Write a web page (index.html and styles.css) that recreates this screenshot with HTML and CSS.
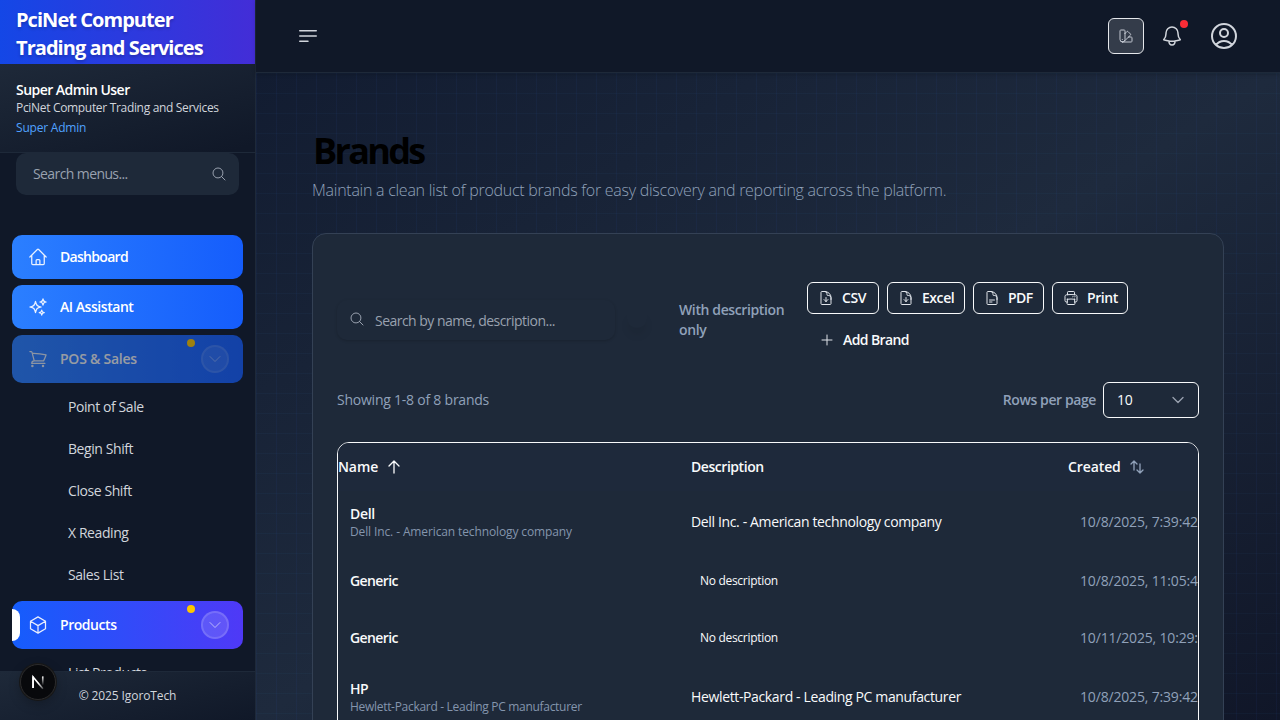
FILE: index.html
```html
<!DOCTYPE html>
<html lang="en">
<head>
<meta charset="utf-8">
<title>Brands - PciNet Computer Trading and Services</title>
<link rel="stylesheet" href="styles.css">
</head>
<body>
<svg class="sprite" aria-hidden="true">
  <symbol id="home" viewBox="0 0 24 24"><path d="M2.25 12l8.954-8.955c.44-.439 1.152-.439 1.591 0L21.75 12M4.5 9.75v10.125c0 .621.504 1.125 1.125 1.125H9.75v-4.875c0-.621.504-1.125 1.125-1.125h2.25c.621 0 1.125.504 1.125 1.125V21h4.125c.621 0 1.125-.504 1.125-1.125V9.75M8.25 21h8.25"/></symbol>
  <symbol id="sparkles" viewBox="0 0 24 24"><path d="M9.813 15.904L9 18.75l-.813-2.846a4.5 4.5 0 00-3.09-3.09L2.25 12l2.846-.813a4.5 4.5 0 003.09-3.09L9 5.25l.813 2.846a4.5 4.5 0 003.09 3.09L15.75 12l-2.846.813a4.5 4.5 0 00-3.09 3.09zM18.259 8.715L18 9.75l-.259-1.035a3.375 3.375 0 00-2.455-2.456L14.25 6l1.036-.259a3.375 3.375 0 002.455-2.456L18 2.25l.259 1.035a3.375 3.375 0 002.456 2.456L21.75 6l-1.035.259a3.375 3.375 0 00-2.456 2.456zM16.894 20.567L16.5 21.75l-.394-1.183a2.25 2.25 0 00-1.423-1.423L13.5 18.75l1.183-.394a2.25 2.25 0 001.423-1.423l.394-1.183.394 1.183a2.25 2.25 0 001.423 1.423l1.183.394-1.183.394a2.25 2.25 0 00-1.423 1.423z"/></symbol>
  <symbol id="cart" viewBox="0 0 24 24"><path d="M2.25 3h1.386c.51 0 .955.343 1.087.835l.383 1.437M7.5 14.25a3 3 0 00-3 3h15.75m-12.75-3h11.218c1.121-2.3 2.1-4.684 2.924-7.138a60.114 60.114 0 00-16.536-1.84M7.5 14.25L5.106 5.272M6 20.25a.75.75 0 11-1.5 0 .75.75 0 011.5 0zm12.75 0a.75.75 0 11-1.5 0 .75.75 0 011.5 0z"/></symbol>
  <symbol id="cube" viewBox="0 0 24 24"><path d="M21 7.5l-9-5.25L3 7.5m18 0l-9 5.25m9-5.25v9l-9 5.25M3 7.5l9 5.25M3 7.5v9l9 5.25m0-9v9"/></symbol>
  <symbol id="bell" viewBox="0 0 24 24"><path d="M14.857 17.082a23.848 23.848 0 005.454-1.31A8.967 8.967 0 0118 9.75v-.7V9A6 6 0 006 9v.75a8.967 8.967 0 01-2.312 6.022c1.733.64 3.56 1.085 5.455 1.31m5.714 0a24.255 24.255 0 01-5.714 0m5.714 0a3 3 0 11-5.714 0"/></symbol>
  <symbol id="user" viewBox="0 0 24 24"><path d="M17.982 18.725A7.488 7.488 0 0012 15.75a7.488 7.488 0 00-5.982 2.975m11.963 0a9 9 0 10-11.963 0m11.963 0A8.966 8.966 0 0112 21a8.966 8.966 0 01-5.982-2.275M15 9.75a3 3 0 11-6 0 3 3 0 016 0z"/></symbol>
  <symbol id="swatch" viewBox="0 0 24 24"><path d="M4.098 19.902a3.75 3.75 0 005.304 0l6.401-6.402M6.75 21A3.75 3.75 0 013 17.25V4.125C3 3.504 3.504 3 4.125 3h5.25c.621 0 1.125.504 1.125 1.125v4.072M6.75 21a3.75 3.75 0 003.75-3.75V8.197M6.75 21h13.125c.621 0 1.125-.504 1.125-1.125v-5.25c0-.621-.504-1.125-1.125-1.125h-4.072M10.5 8.197l2.88-2.88c.438-.439 1.15-.439 1.59 0l3.712 3.713c.44.44.44 1.152 0 1.59l-2.879 2.88M6.75 17.25h.008v.008H6.75v-.008z"/></symbol>
  <symbol id="download" viewBox="0 0 24 24"><path d="M19.5 14.25v-2.625a3.375 3.375 0 00-3.375-3.375h-1.5A1.125 1.125 0 0113.5 7.125v-1.5a3.375 3.375 0 00-3.375-3.375H8.25m.75 12l3 3m0 0l3-3m-3 3v-6m-1.5-9H5.625c-.621 0-1.125.504-1.125 1.125v17.25c0 .621.504 1.125 1.125 1.125h12.75c.621 0 1.125-.504 1.125-1.125V11.25a9 9 0 00-9-9z"/></symbol>
  <symbol id="document" viewBox="0 0 24 24"><path d="M19.5 14.25v-2.625a3.375 3.375 0 00-3.375-3.375h-1.5A1.125 1.125 0 0113.5 7.125v-1.5a3.375 3.375 0 00-3.375-3.375H8.25m0 12.75h7.5m-7.5 3H12M10.5 2.25H5.625c-.621 0-1.125.504-1.125 1.125v17.25c0 .621.504 1.125 1.125 1.125h12.75c.621 0 1.125-.504 1.125-1.125V11.25a9 9 0 00-9-9z"/></symbol>
  <symbol id="printer" viewBox="0 0 24 24"><path d="M6.72 13.829c-.24.03-.48.062-.72.096m.72-.096a42.415 42.415 0 0110.56 0m-10.56 0L6.34 18m10.94-4.171c.24.03.48.062.72.096m-.72-.096L17.66 18m0 0l.229 2.523a1.125 1.125 0 01-1.12 1.227H7.231c-.662 0-1.18-.568-1.12-1.227L6.34 18m11.318 0h1.091A2.25 2.25 0 0021 15.75V9.456c0-1.081-.768-2.015-1.837-2.175a48.055 48.055 0 00-1.913-.247M6.34 18H5.25A2.25 2.25 0 013 15.75V9.456c0-1.081.768-2.015 1.837-2.175a48.041 48.041 0 011.913-.247m10.5 0a48.536 48.536 0 00-10.5 0m10.5 0V3.375c0-.621-.504-1.125-1.125-1.125h-8.25c-.621 0-1.125.504-1.125 1.125v3.659M18 10.5h.008v.008H18V10.5zm-3 0h.008v.008H15V10.5z"/></symbol>
  <symbol id="search" viewBox="0 0 24 24"><path d="M21 21l-5.197-5.197m0 0A7.5 7.5 0 105.196 5.196a7.5 7.5 0 0010.607 10.607z"/></symbol>
  <symbol id="plus" viewBox="0 0 24 24"><path d="M12 4.5v15m7.5-7.5h-15"/></symbol>
  <symbol id="chevron" viewBox="0 0 24 24"><path d="M19.5 8.25l-7.5 7.5-7.5-7.5"/></symbol>
  <symbol id="menu" viewBox="0 0 24 24"><path d="M3.75 6.75h16.5M3.75 12h16.5m-16.5 5.25H12"/></symbol>
  <symbol id="up" viewBox="0 0 24 24"><path d="M4.5 10.5L12 3m0 0l7.5 7.5M12 3v18"/></symbol>
  <symbol id="sort" viewBox="0 0 24 24"><path d="M3 7.5L7.5 3m0 0L12 7.5M7.5 3v13.5m13.5 0L16.5 21m0 0L12 16.5m4.5 4.5V7.5"/></symbol>
</svg>

<div class="app">
  <aside class="sidebar">
    <div class="logo">PciNet Computer<br>Trading and Services</div>
    <div class="profile">
      <div class="profile-name">Super Admin User</div>
      <div class="profile-org">PciNet Computer Trading and Services</div>
      <div class="profile-role">Super Admin</div>
    </div>
    <div class="menu-search"><span>Search menus...</span><svg class="icon i16"><use href="#search"/></svg></div>
    <nav class="nav">
      <a class="item tight"><svg class="icon i20"><use href="#home"/></svg><span>Dashboard</span></a>
      <a class="item"><svg class="icon i20"><use href="#sparkles"/></svg><span>AI Assistant</span></a>
      <a class="item group dim"><svg class="icon i20"><use href="#cart"/></svg><span>POS &amp; Sales</span><i class="toggle"><svg class="icon i16"><use href="#chevron"/></svg></i><b class="dot"></b></a>
      <div class="sub">
        <a>Point of Sale</a><a>Begin Shift</a><a>Close Shift</a><a>X Reading</a><a>Sales List</a>
      </div>
      <a class="item group active"><svg class="icon i20"><use href="#cube"/></svg><span>Products</span><i class="toggle"><svg class="icon i16"><use href="#chevron"/></svg></i><b class="dot"></b></a>
      <div class="sub"><a>List Products</a></div>
    </nav>
    <footer class="side-foot">© 2025 IgoroTech</footer>
    <div class="dev-badge"><svg viewBox="0 0 40 40" class="n-mark">
      <defs>
        <linearGradient id="n1" gradientUnits="userSpaceOnUse" x1="20" y1="22" x2="26" y2="30"><stop offset="0" stop-color="#fff"/><stop offset="1" stop-color="#fff" stop-opacity=".1"/></linearGradient>
        <linearGradient id="n2" gradientUnits="userSpaceOnUse" x1="26" y1="13" x2="26" y2="24"><stop offset="0" stop-color="#fff"/><stop offset="1" stop-color="#fff" stop-opacity="0"/></linearGradient>
      </defs>
      <path d="M14.2 27V14.2L25.8 28" fill="none" stroke="url(#n1)" stroke-width="1.9"/>
      <path d="M14.2 27V13.4" stroke="#fff" stroke-width="1.9"/>
      <path d="M25.6 13.4V24" stroke="url(#n2)" stroke-width="1.9"/>
    </svg></div>
  </aside>

  <div class="page">
    <header class="topbar">
      <svg class="icon i24"><use href="#menu"/></svg>
      <div class="actions">
        <button class="theme"><svg class="icon i16"><use href="#swatch"/></svg></button>
        <div class="bell"><svg class="icon i24"><use href="#bell"/></svg><b></b></div>
        <svg class="icon i32"><use href="#user"/></svg>
      </div>
    </header>
    <main class="main">
      <h1>Brands</h1>
      <p class="lead">Maintain a clean list of product brands for easy discovery and reporting across the platform.</p>
      <section class="card">
        <div class="toolbar">
          <div class="search"><svg class="icon i16"><use href="#search"/></svg><span>Search by name, description...</span></div>
          <div class="switch"><i></i></div>
          <div class="switch-label">With description only</div>
          <div class="buttons">
            <button class="btn b-csv"><svg class="icon i16"><use href="#download"/></svg><span>CSV</span></button>
            <button class="btn b-excel"><svg class="icon i16"><use href="#download"/></svg><span>Excel</span></button>
            <button class="btn b-pdf"><svg class="icon i16"><use href="#document"/></svg><span>PDF</span></button>
            <button class="btn b-print"><svg class="icon i16"><use href="#printer"/></svg><span>Print</span></button>
            <button class="btn add"><svg class="icon i16"><use href="#plus"/></svg><span>Add Brand</span></button>
          </div>
        </div>
        <div class="summary">
          <span class="showing">Showing 1-8 of 8 brands</span>
          <span class="rows-label">Rows per page</span>
          <div class="select"><span>10</span><svg class="icon i16"><use href="#chevron"/></svg></div>
        </div>
        <div class="table">
          <div class="row head">
            <div class="sortable"><span>Name</span><svg class="icon i16"><use href="#up"/></svg></div>
            <div class="head-desc">Description</div>
            <div class="sortable muted"><span>Created</span><svg class="icon i16"><use href="#sort"/></svg></div>
          </div>
          <div class="row tall">
            <div class="name short"><strong>Dell</strong><small>Dell Inc. - American technology company</small></div>
            <div class="desc">Dell Inc. - American technology company</div>
            <div class="date">10/8/2025, 7:39:42 AM</div>
          </div>
          <div class="row">
            <div class="name"><strong>Generic</strong></div>
            <div class="none">No description</div>
            <div class="date">10/8/2025, 11:05:42 AM</div>
          </div>
          <div class="row">
            <div class="name"><strong>Generic</strong></div>
            <div class="none">No description</div>
            <div class="date">10/11/2025, 10:29:15 AM</div>
          </div>
          <div class="row tall">
            <div class="name"><strong>HP</strong><small>Hewlett-Packard - Leading PC manufacturer</small></div>
            <div class="desc">Hewlett-Packard - Leading PC manufacturer</div>
            <div class="date">10/8/2025, 7:39:42 AM</div>
          </div>
        </div>
      </section>
    </main>
  </div>
</div>
</body>
</html>
```
FILE: styles.css
```css
* { box-sizing: border-box; }
body {
  margin: 0;
  height: 720px;
  overflow: hidden;
  background: #101828;
  color: #f9fafb;
  font: 14px/20px "Open Sans", "Noto Sans", sans-serif;
  white-space: nowrap;
}
button { font: inherit; color: inherit; background: none; padding: 0; }
.sprite { position: absolute; width: 0; height: 0; }
.icon { fill: none; stroke: currentColor; stroke-width: 1.5; stroke-linecap: round; stroke-linejoin: round; flex: none; display: block; }
.i16 { width: 16px; height: 16px; }
.i20 { width: 20px; height: 20px; }
.i24 { width: 24px; height: 24px; }
.i32 { width: 32px; height: 32px; }
.app { display: flex; height: 720px; overflow: hidden; }

/* Sidebar */
.sidebar { position: relative; width: 256px; height: 720px; flex: none; display: flex; flex-direction: column; background: #101828; border-right: 1px solid #1e2939; }
.logo { height: 64px; flex: none; padding: 6px 16px; background: linear-gradient(90deg, #1447e6, #432dd7); color: #fff; font-size: 20px; line-height: 28px; font-weight: 700; letter-spacing: -.95px; text-shadow: 0 2px 3px rgba(0,0,0,.2); }
.profile { height: 89px; flex: none; padding: 16px 16px 0; border-bottom: 1px solid #1e2939; background: linear-gradient(165deg, #1e2939, #101828 95%); }
.profile-name { font-weight: 600; letter-spacing: -.53px; color: #fff; }
.profile-org { font-size: 12px; line-height: 16px; letter-spacing: -.32px; color: #d1d5dc; }
.profile-role { font-size: 12px; line-height: 16px; margin-top: 4px; letter-spacing: -.2px; color: #51a2ff; }
.menu-search { height: 42px; flex: none; margin: 0 16px; padding: 0 12px 0 17px; display: flex; align-items: center; justify-content: space-between; border-radius: 10px; background: #1e2939; color: #99a1af; letter-spacing: -.6px; }
.nav { flex: 1; overflow: hidden; padding: 40px 12px 0; }
.item { position: relative; display: flex; align-items: center; gap: 12px; height: 44px; margin-bottom: 6px; padding: 0 14px 0 16px; border-radius: 10px; font-weight: 600; letter-spacing: -.45px; color: #fff; background: linear-gradient(90deg, #2b7fff, #155dfc); }
.tight { letter-spacing: -.7px; }
.item .icon { opacity: .9; }
.item span { flex: 1; }
.group { height: 48px; margin-bottom: 3px; }
.dim { opacity: .6; color: #f3f4f6; letter-spacing: -.25px; }
.active { margin-bottom: 3px; background: linear-gradient(90deg, #155dfc, #4f39f6); }
.active::before { content: ""; position: absolute; left: 0; top: 8px; width: 8px; height: 32px; background: #fff; border-radius: 0 8px 8px 0; }
.toggle { width: 28px; height: 28px; display: flex; align-items: center; justify-content: center; border-radius: 50%; border: 2px solid rgba(255,255,255,.14); background: rgba(255,255,255,.13); color: rgba(255,255,255,.65); }
.dim .toggle { opacity: .7; }
.dot { position: absolute; top: 4px; left: 175px; width: 8px; height: 8px; border-radius: 50%; background: #fdc700; }
.sub { display: flex; flex-direction: column; padding-bottom: 5px; }
.sub a { height: 42px; line-height: 42px; padding-left: 56px; color: #d1d5dc; letter-spacing: -.42px; }
.side-foot { height: 49px; flex: none; border-top: 1px solid #1e2939; background: linear-gradient(165deg, #1e2939, #101828); text-align: center; font-size: 12px; line-height: 48px; color: #d1d5dc; letter-spacing: -.1px; }
.dev-badge { position: absolute; left: 20px; top: 664px; width: 36px; height: 36px; border-radius: 50%; background: #08090c; border: 1px solid #2b2b2d; box-shadow: 0 0 0 1px #171717, 0 4px 12px rgba(0,0,0,.25); }
.n-mark { display: block; width: 34px; height: 34px; }

/* Page */
.page { width: 1024px; display: flex; flex-direction: column; }
.topbar { position: relative; height: 73px; flex: none; display: flex; align-items: center; justify-content: space-between; padding: 0 40px; border-bottom: 1px solid #1e2939; background: #101828; color: #d1d5dc; box-shadow: 0 1px 4px rgba(0,0,0,.25); }
.actions { display: flex; align-items: center; }
.theme { width: 36px; height: 36px; display: grid; place-items: center; border: 1px solid #e5e7eb; border-radius: 6px; background: #343c4a; color: #c2c7d0; }
.bell { position: relative; margin: 0 24px 0 16px; }
.bell b { position: absolute; left: 20px; top: -4px; width: 8px; height: 8px; border-radius: 50%; background: #fb2c36; }
.main {
  height: 647px;
  overflow: hidden;
  padding: 56px 56px 0;
  background:
    linear-gradient(90deg, rgba(43,90,200,.07) 1px, transparent 1px) 0 0 / 20px 20px,
    linear-gradient(rgba(43,110,170,.06) 1px, transparent 1px) 0 0 / 20px 20px,
    linear-gradient(to bottom right, #121c31, #1e2a3d 50%, #101628);
}
h1 { margin: 0; padding-left: 1px; font-size: 36px; line-height: 44px; font-weight: 700; letter-spacing: -2.7px; color: #000; }
.lead { margin: 5px 0 0; font-size: 16px; line-height: 24px; font-weight: 300; letter-spacing: -.26px; color: #90a1b9; }
.card { height: 560px; margin-top: 31px; padding: 48px 24px 0; border: 1px solid #344155; border-radius: 14px; background: #1e2939; }
.toolbar { display: flex; }
.search { width: 278px; height: 40px; margin-top: 18px; padding-left: 12px; display: flex; align-items: center; gap: 10px; border-radius: 10px; box-shadow: 0 1px 3px rgba(0,0,0,.18); color: #99a1af; }
.search span { margin-top: 2px; letter-spacing: -.53px; }
.search .icon { margin-top: -2px; }
.switch { width: 40px; height: 24px; margin: 26px 0 0 10px; }
.switch i { display: block; margin-left: 2px; width: 20px; height: 20px; border-radius: 50%; box-shadow: 0 8px 10px -1px rgba(0,0,0,.07); }
.switch-label { width: 112px; margin: 18px 0 0 14px; white-space: normal; font-weight: 600; color: #90a1b9; letter-spacing: -.38px; }
.buttons { width: 350px; margin-left: 16px; display: flex; flex-wrap: wrap; gap: 10px 8px; }
.btn { height: 32px; display: flex; align-items: center; gap: 8px; padding-left: 10px; border: 1px solid #f9fafb; border-radius: 6px; font-weight: 600; }
.btn .icon { color: #e0e4ea; }
.b-csv { width: 72px; letter-spacing: -.4px; }
.b-excel { width: 78px; letter-spacing: -.45px; }
.b-pdf { width: 71px; letter-spacing: -.6px; }
.b-print { width: 76px; letter-spacing: -.4px; }
.add { width: 120px; border-color: transparent; padding-left: 11px; letter-spacing: -.6px; }
.summary { display: flex; align-items: center; margin-top: 26px; color: #90a1b9; letter-spacing: -.23px; }
.rows-label { margin-left: auto; font-weight: 600; letter-spacing: -.4px; }
.select { width: 96px; height: 36px; margin-left: 7px; padding: 0 12px 0 13px; display: flex; align-items: center; justify-content: space-between; border: 1px solid #f9fafb; border-radius: 6px; color: #f9fafb; }
.select .icon { color: #99a1af; stroke-width: 2; }
.table { height: 400px; margin-top: 24px; border: 1px solid #f9fafb; border-radius: 12px; overflow: hidden; }
.row { display: grid; grid-template-columns: 353px 377px 230px; align-items: center; height: 57px; }
.tall { height: 61px; }
.head { height: 48px; font-weight: 600; background: #1e293b; letter-spacing: -.1px; }
.head-desc { letter-spacing: -.45px; }
.sortable { display: flex; align-items: center; gap: 8px; }
.sortable .icon { stroke-width: 2; }
.muted .icon { color: #90a1b9; }
.name { padding-left: 12px; }
.name strong { display: block; font-weight: 600; letter-spacing: -.6px; }
.name small { display: block; font-size: 12px; line-height: 16px; color: #8495ad; letter-spacing: -.3px; }
.short small { letter-spacing: -.12px; }
.short strong { letter-spacing: -.35px; }
.desc { letter-spacing: -.36px; }
.none { padding-left: 9px; font-size: 12px; letter-spacing: -.3px; }
.date { padding-left: 12px; color: #90a1b9; letter-spacing: -.17px; }
```
